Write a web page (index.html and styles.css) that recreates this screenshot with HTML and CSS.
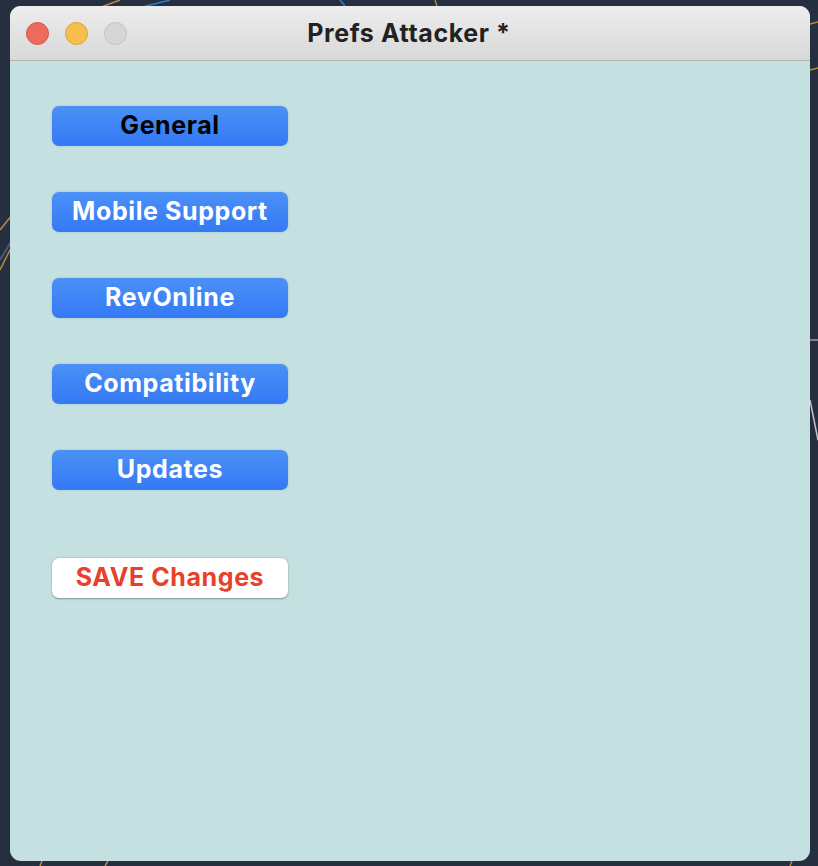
FILE: index.html
```html
<!DOCTYPE html>
<html>
<head>
<meta charset="utf-8">
<link rel="stylesheet" href="styles.css">
</head>
<body>
<svg class="desktop" width="818" height="866" viewBox="0 0 818 866">
  <path d="M40 30 L120 0" stroke="#b98a3a" stroke-width="1.5" fill="none"/>
  <path d="M130 10 L170 0" stroke="#2f7fc4" stroke-width="1.5" fill="none"/>
  <path d="M0 230 L12 215" stroke="#b98a3a" stroke-width="1.5" fill="none"/>
  <path d="M0 260 L12 240" stroke="#4a5a70" stroke-width="2" fill="none"/>
  <path d="M10 250 L0 270" stroke="#b98a3a" stroke-width="1.5" fill="none"/>
  <path d="M810 340 L818 340" stroke="#9aa0a8" stroke-width="1.5" fill="none"/>
  <path d="M810 400 L818 440" stroke="#c0c4c8" stroke-width="1.5" fill="none"/>
  <path d="M810 70 L818 68" stroke="#b98a3a" stroke-width="1.5" fill="none"/>
  <path d="M810 24 L818 22" stroke="#b98a3a" stroke-width="1.5" fill="none"/>
  <path d="M340 0 L345 6" stroke="#2f7fc4" stroke-width="1.5" fill="none"/>
  <path d="M435 0 L437 6" stroke="#b98a3a" stroke-width="1.5" fill="none"/>
  <path d="M40 866 L42 861" stroke="#b98a3a" stroke-width="1.5" fill="none"/>
  <path d="M105 866 L108 861" stroke="#b98a3a" stroke-width="1.5" fill="none"/>
  <path d="M790 866 L800 840" stroke="#b98a3a" stroke-width="1.5" fill="none"/>
</svg>
<div class="window">
  <div class="titlebar">
    <div class="lights">
      <span class="light red"></span>
      <span class="light yellow"></span>
      <span class="light gray"></span>
    </div>
    <div class="title">Prefs Attacker *</div>
  </div>
  <div class="content">
    <button class="btn btn-blue btn-active">General</button>
    <button class="btn btn-blue">Mobile Support</button>
    <button class="btn btn-blue">RevOnline</button>
    <button class="btn btn-blue">Compatibility</button>
    <button class="btn btn-blue">Updates</button>
    <button class="btn btn-save">SAVE Changes</button>
  </div>
</div>
</body>
</html>
```
FILE: styles.css
```css
html, body {
  margin: 0;
  padding: 0;
}
body {
  width: 818px;
  height: 866px;
  background: #262f40;
  position: relative;
  overflow: hidden;
  font-family: Inter, "Liberation Sans", Arial, sans-serif;
}
.desktop {
  position: absolute;
  left: 0;
  top: 0;
}
.window {
  position: relative;
  margin: 6px 0 0 10px;
  width: 800px;
  height: 855px;
  border-radius: 11px;
  overflow: hidden;
  background: #c5e0e0;
  display: flex;
  flex-direction: column;
}
.titlebar {
  height: 54px;
  flex: none;
  background: linear-gradient(#ededed, #d8d8d8);
  border-bottom: 1px solid #b4b4b4;
  position: relative;
  display: flex;
  align-items: center;
  justify-content: center;
}
.lights {
  position: absolute;
  left: 16px;
  top: 16px;
  display: flex;
  gap: 16px;
}
.light {
  width: 23px;
  height: 23px;
  border-radius: 50%;
  box-sizing: border-box;
}
.red { background: #ee6a5e; border: 1px solid #d9544a; }
.yellow { background: #f5be4f; border: 1px solid #dca23a; }
.gray { background: #d6d6d6; border: 1px solid #c2c2c2; }
.title {
  font-weight: 700;
  font-size: 25px;
  letter-spacing: 0.6px;
  color: #222;
  margin-top: 0;
  margin-left: -2px;
}
.content {
  flex: 1;
  padding: 45px 0 0 42px;
  display: flex;
  flex-direction: column;
  align-items: flex-start;
  gap: 46px;
}
.btn {
  width: 236px;
  height: 40px;
  border-radius: 7px;
  font-family: Inter, "Liberation Sans", Arial, sans-serif;
  font-weight: 700;
  font-size: 25px;
  letter-spacing: 0.6px;
  padding: 0 0 2px 0;
  display: flex;
  align-items: center;
  justify-content: center;
  box-sizing: border-box;
}
.btn-blue {
  background: linear-gradient(#4b91f6, #3479f5);
  color: #fff;
  border: none;
  box-shadow: 0 0 2px rgba(40,90,160,0.3);
}
.btn-active {
  color: #000;
}
.btn-save {
  margin-top: 22px;
  background: #fff;
  color: #e8402a;
  border: none;
  box-shadow: 0 0.5px 2px rgba(0,0,0,0.35);
}
```
